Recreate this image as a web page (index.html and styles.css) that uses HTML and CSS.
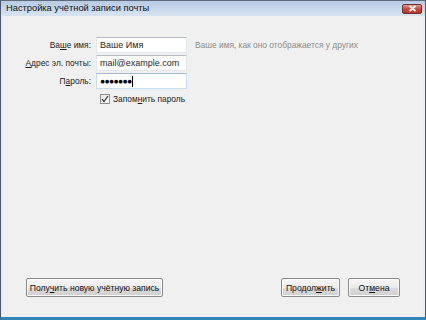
FILE: index.html
```html
<!DOCTYPE html>
<html lang="ru">
<head>
<meta charset="utf-8">
<title>Настройка учётной записи почты</title>
<link rel="stylesheet" href="styles.css">
</head>
<body>
<div class="window">
  <div class="titlebar">
    <span class="title">Настройка учётной записи почты</span>
    <span class="close"><svg width="9" height="7" viewBox="0 0 9 7"><path d="M1.5 0.8 L7.5 6.2 M7.5 0.8 L1.5 6.2" stroke="#fff" stroke-width="1.8"/></svg></span>
  </div>
  <div class="content">
    <div class="form">
      <label class="lbl">Ва<u>ш</u>е имя:</label>
      <div class="input">Ваше Имя</div>
      <span class="hint">Ваше имя, как оно отображается у других</span>

      <label class="lbl"><u>А</u>дрес эл. почты:</label>
      <div class="input">mail@example.com</div>
      <span></span>

      <label class="lbl">П<u>а</u>роль:</label>
      <div class="input focus"><span class="dots">●●●●●●●</span><span class="caret"></span></div>
      <span></span>

      <span></span>
      <div class="check-row">
        <span class="checkbox"><svg width="8" height="8" viewBox="0 0 8 8"><path d="M1 4.2 L3 6.5 L7 1" fill="none" stroke="#333" stroke-width="1.2"/></svg></span>
        <span>Запом<u>н</u>ить пароль</span>
      </div>
      <span></span>
    </div>
    <div class="buttons">
      <button class="btn wide">Полу<u>ч</u>ить новую учётную запись</button>
      <div class="right">
        <button class="btn">Продол<u>ж</u>ить</button>
        <button class="btn">От<u>м</u>ена</button>
      </div>
    </div>
  </div>
</div>
</body>
</html>
```

FILE: styles.css
```css
* { box-sizing: border-box; }
html, body { margin: 0; padding: 0; }
body {
  width: 426px;
  height: 320px;
  overflow: hidden;
  font-family: "Liberation Sans", Arial, sans-serif;
  font-size: 8.4px;
  color: #1e1e1e;
  background: #f0f0f0;
}
.window {
  width: 426px;
  height: 320px;
  display: flex;
  flex-direction: column;
  border-left: 1px solid #4d5868;
  border-right: 1px solid #4d5868;
  border-top: 1px solid #5f6b7c;
  border-bottom: 3px solid #2f86b7;
  background: #f0f0f0;
}
.titlebar {
  height: 15px;
  flex: none;
  display: flex;
  align-items: center;
  justify-content: space-between;
  padding: 0 3px 0 5px;
  background: linear-gradient(#b6cbe4, #c9d9ec 60%, #d6e2f0);
  border-bottom: 1px solid #d8e2ee;
}
.title {
  font-size: 9.3px;
  color: #111;
}
.close {
  width: 20px;
  height: 10px;
  margin-top: 1px;
  border: 1px solid #7a2f2a;
  border-radius: 2px;
  background: linear-gradient(#e29a8e, #c8493c 50%, #b5372b);
  display: flex;
  align-items: center;
  justify-content: center;
}
.content {
  flex: 1;
  display: flex;
  flex-direction: column;
  justify-content: space-between;
  padding: 21px 23px 20px 0;
  border-left: 2px solid #e6edf5;
  border-right: 2px solid #e6edf5;
}
.form {
  display: grid;
  grid-template-columns: 88px 91px auto;
  column-gap: 5px;
  row-gap: 2px;
  align-items: center;
}
.lbl {
  text-align: right;
}
.input {
  height: 16px;
  background: #fff;
  border: 1px solid #e2e7ec;
  border-top-color: #b5bcc5;
  padding: 0 3px;
  line-height: 14px;
  font-size: 9px;
  display: flex;
  align-items: center;
  white-space: nowrap;
}
.input.focus {
  border-color: #c5dbef;
  border-top-color: #a3b9d0;
}
.dots {
  font-size: 8.6px;
  letter-spacing: -0.7px;
  color: #000;
}
.caret {
  width: 1px;
  height: 11px;
  background: #000;
  margin-left: 1px;
}
.hint {
  color: #8c8c8c;
  margin-left: 3px;
  white-space: nowrap;
}
.check-row {
  display: flex;
  align-items: center;
  gap: 3px;
  padding-left: 4px;
  margin-top: 3px;
  white-space: nowrap;
}
.checkbox {
  width: 10px;
  height: 10px;
  border: 1px solid #8f8f8f;
  background: linear-gradient(135deg, #e4e4e4, #fbfbfb);
  display: flex;
  align-items: center;
  justify-content: center;
}
.buttons {
  display: flex;
  justify-content: space-between;
  align-items: center;
  padding-left: 23px;
}
.right {
  display: flex;
  gap: 8px;
}
.btn {
  height: 19px;
  font-family: "Liberation Sans", Arial, sans-serif;
  font-size: 8.6px;
  color: #111;
  border: 1px solid #8a8a8a;
  border-radius: 2px;
  background: linear-gradient(#f6f6f6, #ebebeb 50%, #dcdcdc 51%, #d0d0d0);
  box-shadow: inset 0 0 0 1px #fbfbfb;
  padding: 0;
  width: 59px;
  white-space: nowrap;
}
.btn.wide {
  width: 137px;
}
.right .btn + .btn {
  width: 52px;
}
```
